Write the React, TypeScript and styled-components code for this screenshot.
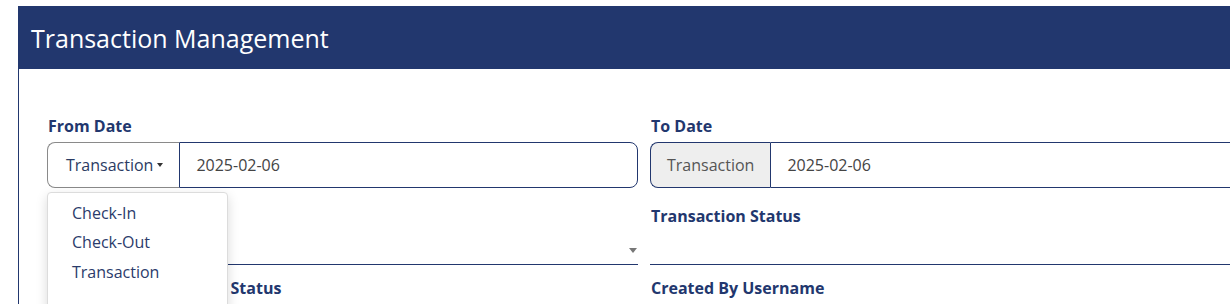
import React from "react";
import styled, { createGlobalStyle } from "styled-components";

const Global = createGlobalStyle`
  html, body { margin: 0; padding: 0; background: #fff; overflow: hidden; }
  body { font-family: "Open Sans", "Liberation Sans", sans-serif; }
  * { box-sizing: border-box; }
`;

const NAVY = "#22376e";

const Page = styled.div`
  padding: 6px 0 0 18px;
  width: 1300px;
`;

const Card = styled.div`
  width: 1254px;
  border: 1px solid ${NAVY};
  border-top: none;
  background: #fff;
`;

const Header = styled.div`
  height: 63px;
  margin-left: -1px;
  margin-right: -1px;
  background: ${NAVY};
  display: flex;
  align-items: center;
  padding-left: 13px;
`;

const Title = styled.h1`
  margin: 0;
  color: #fff;
  font-weight: 400;
  font-size: 25px;
  line-height: 1;
  padding-top: 1px;
`;

const Body = styled.div`
  padding: 45px 28px 0 28px;
  display: grid;
  grid-template-columns: 591px 591px;
  column-gap: 12px;
  align-items: start;
`;

const Group = styled.div<{ $mb: number }>`
  margin-bottom: ${(p) => p.$mb}px;
`;

const Label = styled.label`
  display: block;
  color: ${NAVY};
  font-weight: 700;
  font-size: 16px;
  line-height: 24px;
  padding-left: 1px;
  margin-bottom: 4px;
  white-space: nowrap;
`;

const InputGroup = styled.div`
  position: relative;
  display: flex;
  height: 46px;
`;

const ToggleButton = styled.button`
  display: flex;
  align-items: center;
  padding: 0 16px 0 18px;
  background: #fff;
  border: 1px solid #8a8a8a;
  border-right: none;
  border-radius: 8px 0 0 8px;
  color: #2b3b63;
  font-family: inherit;
  font-size: 16px;
  cursor: pointer;
`;

const Caret = styled.span`
  display: inline-block;
  margin-left: 4px;
  width: 0;
  height: 0;
  border-top: 4px solid #333;
  border-left: 3.5px solid transparent;
  border-right: 3.5px solid transparent;
`;

const Addon = styled.span`
  display: flex;
  align-items: center;
  padding: 0 16px;
  background: #eeeeee;
  border: 1px solid ${NAVY};
  border-right: none;
  border-radius: 8px 0 0 8px;
  color: #555;
  font-size: 16px;
`;

const TextInput = styled.input`
  flex: 1;
  min-width: 0;
  border: 1px solid ${NAVY};
  border-radius: 0 8px 8px 0;
  padding: 0 16px;
  font-family: inherit;
  font-size: 16px;
  color: #444;
  background: #fff;
  outline: none;
`;

const SelectBox = styled.div`
  position: relative;
  height: 33px;
  border-bottom: 1px solid ${NAVY};
`;

const SelectCaret = styled.span`
  position: absolute;
  right: 1px;
  top: 16px;
  width: 0;
  height: 0;
  border-top: 5px solid #777;
  border-left: 4.5px solid transparent;
  border-right: 4.5px solid transparent;
`;

const Menu = styled.ul`
  position: absolute;
  left: 0;
  top: calc(100% + 4px);
  width: 181px;
  height: 140px;
  margin: 0;
  padding: 5px 0;
  list-style: none;
  background: #fff;
  border: 1px solid #dcdcdc;
  border-radius: 4px;
  box-shadow: 0 4px 12px rgba(0, 0, 0, 0.15);
  z-index: 10;
`;

const MenuItem = styled.li`
  padding: 2.75px 24px;
  font-size: 16px;
  line-height: 24px;
  color: #2b3b6b;
  cursor: pointer;
`;

export default function App() {
  return (
    <>
      <Global />
      <Page>
        <Card>
          <Header>
            <Title>Transaction Management</Title>
          </Header>
          <Body>
            <Group $mb={16}>
              <Label>From Date</Label>
              <InputGroup>
                <ToggleButton>
                  Transaction
                  <Caret />
                </ToggleButton>
                <TextInput defaultValue="2025-02-06" />
                <Menu>
                  <MenuItem>Check-In</MenuItem>
                  <MenuItem>Check-Out</MenuItem>
                  <MenuItem>Transaction</MenuItem>
                </Menu>
              </InputGroup>
            </Group>
            <Group $mb={16}>
              <Label>To Date</Label>
              <InputGroup>
                <Addon>Transaction</Addon>
                <TextInput defaultValue="2025-02-06" />
              </InputGroup>
            </Group>
            <Group $mb={10.5}>
              <Label>Transaction Type</Label>
              <SelectBox>
                <SelectCaret />
              </SelectBox>
            </Group>
            <Group $mb={10.5}>
              <Label>Transaction Status</Label>
              <SelectBox />
            </Group>
            <Group $mb={12}>
              <Label>Transaction Payments Status</Label>
              <SelectBox />
            </Group>
            <Group $mb={12}>
              <Label>Created By Username</Label>
              <SelectBox />
            </Group>
          </Body>
        </Card>
      </Page>
    </>
  );
}
